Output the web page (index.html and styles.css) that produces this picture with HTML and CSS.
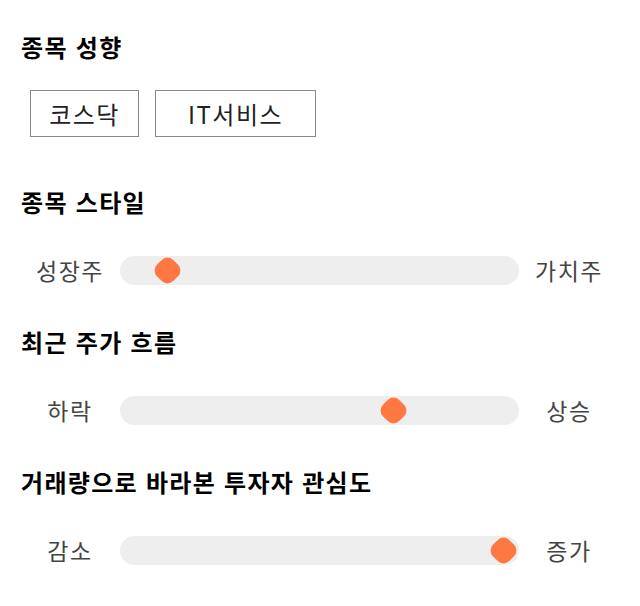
FILE: index.html
```html
<!DOCTYPE html>
<html lang="ko">
<head>
<meta charset="utf-8">
<link rel="stylesheet" href="styles.css">
</head>
<body>
<div class="page">
  <section class="group">
    <h2 class="title">종목 성향</h2>
    <div class="tags">
      <span class="tag">코스닥</span>
      <span class="tag">IT서비스</span>
    </div>
  </section>
  <section class="group">
    <h2 class="title">종목 스타일</h2>
    <div class="scale">
      <span class="end">성장주</span>
      <div class="track"><span class="thumb" style="left: 11.8%"></span></div>
      <span class="end">가치주</span>
    </div>
  </section>
  <section class="group">
    <h2 class="title">최근 주가 흐름</h2>
    <div class="scale">
      <span class="end">하락</span>
      <div class="track"><span class="thumb" style="left: 68.6%"></span></div>
      <span class="end">상승</span>
    </div>
  </section>
  <section class="group">
    <h2 class="title">거래량으로 바라본 투자자 관심도</h2>
    <div class="scale">
      <span class="end">감소</span>
      <div class="track"><span class="thumb" style="left: 96.2%"></span></div>
      <span class="end">증가</span>
    </div>
  </section>
</div>
</body>
</html>
```

FILE: styles.css
```css
* { box-sizing: border-box; }
html, body { margin: 0; padding: 0; background: #fff; }
body {
  font-family: "Noto Sans CJK KR", "Noto Sans", sans-serif;
  color: #222;
}
.page {
  padding: 30px 20px 0 20px;
  width: 640px;
}
.group { display: flex; flex-direction: column; }
.title {
  margin: 0 0 0 1px;
  font-size: 24px;
  font-weight: 700;
  line-height: 34px;
  color: #000;
  letter-spacing: 1.3px;
}
.tags {
  display: flex;
  gap: 16px;
  padding: 26px 0 0 10px;
  margin-bottom: 48px;
}
.tag {
  display: flex;
  align-items: center;
  justify-content: center;
  height: 47px;
  border: 1px solid #888;
  font-size: 24px;
  letter-spacing: 1.5px;
  color: #222;
}
.tag:first-child { width: 109px; }
.tag:last-child { width: 161px; }
.scale {
  display: flex;
  align-items: center;
  height: 29px;
  margin: 37px 0 40px 0;
}
.end {
  width: 100px;
  text-align: center;
  font-size: 23px;
  line-height: 29px;
  letter-spacing: 1.5px;
  color: #444;
}
.track {
  position: relative;
  width: 399px;
  height: 29px;
  background: #eee;
  border-radius: 15px;
}
.thumb {
  position: absolute;
  top: 50%;
  width: 23px;
  height: 23px;
  margin: -11.5px 0 0 -11.5px;
  background: #ff7741;
  border-radius: 8px;
  transform: rotate(45deg);
}
```
